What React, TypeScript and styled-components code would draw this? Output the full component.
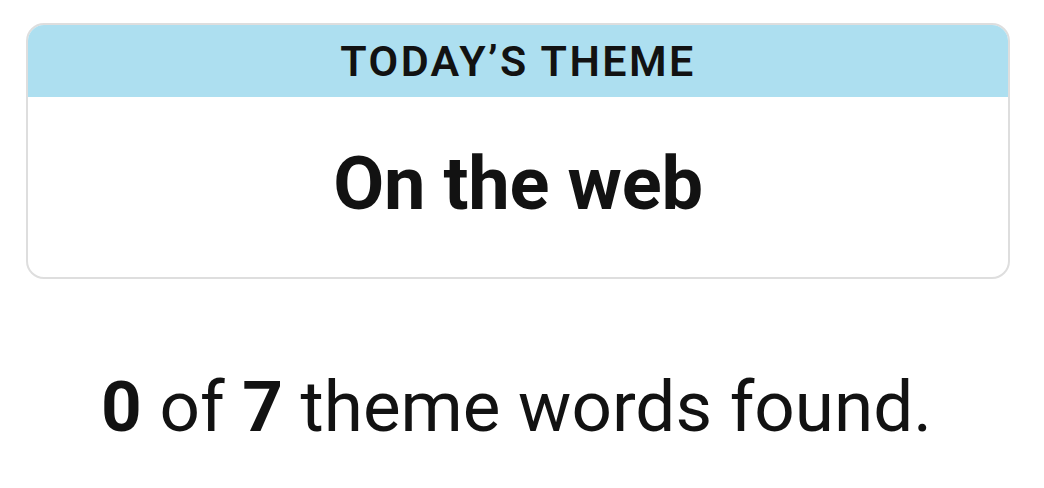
import React from "react";
import styled, { createGlobalStyle } from "styled-components";

const Global = createGlobalStyle`
  html, body { margin: 0; padding: 0; background: #fff; }
  body { font-family: Roboto, "Liberation Sans", sans-serif; color: #121212; }
`;

const Page = styled.div`
  width: 1044px;
  height: 488px;
  box-sizing: border-box;
  padding: 23px 34px 0 26px;
  display: flex;
  flex-direction: column;
`;

const Card = styled.section`
  border: 2px solid #dedede;
  border-radius: 18px;
  overflow: hidden;
  display: flex;
  flex-direction: column;
`;

const Header = styled.div`
  background: #addff0;
  height: 74px;
  margin: -2px -2px 0;
  display: flex;
  align-items: center;
  justify-content: center;
`;

const HeaderText = styled.h2`
  margin: 0;
  font-size: 43px;
  font-weight: 600;
  letter-spacing: 2.4px;
  color: #121212;
  padding-top: 2px;
`;

const Body = styled.div`
  height: 180px;
  display: flex;
  align-items: center;
  justify-content: center;
`;

const Theme = styled.h1`
  margin: 0;
  font-size: 74px;
  font-weight: 700;
  letter-spacing: -0.2px;
  color: #121212;
  padding-bottom: 8px;
`;

const Count = styled.p`
  margin: 92px 0 0;
  padding-right: 3px;
  text-align: center;
  font-size: 71px;
  font-weight: 400;
  line-height: 1;
  color: #121212;
`;

const B = styled.b`
  font-weight: 700;
`;

export default function App() {
  return (
    <>
      <Global />
      <Page>
        <Card>
          <Header>
            <HeaderText>TODAY’S THEME</HeaderText>
          </Header>
          <Body>
            <Theme>On the web</Theme>
          </Body>
        </Card>
        <Count>
          <B>0</B> of <B>7</B> theme words found.
        </Count>
      </Page>
    </>
  );
}
